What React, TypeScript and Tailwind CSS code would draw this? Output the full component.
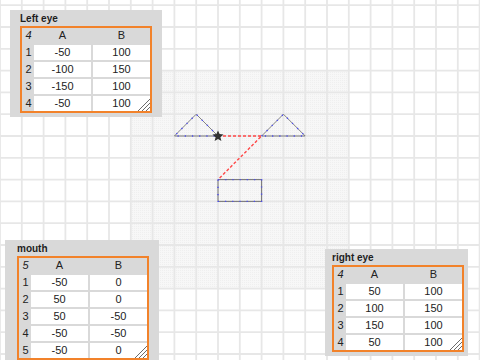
import React from "react";

type Row = [number, number];

const S = 0.436;
const OX = 239.8;
const OY = 179.6;
const px = (x: number, y: number) => `${OX + x * S},${OY - y * S}`;

function Handle() {
  return (
    <svg className="absolute right-0 bottom-0" width="13" height="13" viewBox="0 0 13 13">
      <g stroke="#fff" strokeWidth="1">
        <line x1="13" y1="2" x2="2" y2="13" />
        <line x1="13" y1="6" x2="6" y2="13" />
        <line x1="13" y1="10" x2="10" y2="13" />
      </g>
      <g stroke="#6b6b6b" strokeWidth="1">
        <line x1="13" y1="1" x2="1" y2="13" />
        <line x1="13" y1="5" x2="5" y2="13" />
        <line x1="13" y1="9" x2="9" y2="13" />
      </g>
    </svg>
  );
}

function TablePanel({ title, rows, className, pad }: { title: string; rows: Row[]; className: string; pad: string }) {
  return (
    <div className={`absolute bg-[#d9d9d9] ${pad} ${className}`}>
      <div className="h-[16px] flex items-center text-[10px] font-bold text-[#1e1e1e]">{title}</div>
      <div className="relative w-[132px] border-2 border-[#f2822a] grid grid-cols-[10px_1fr_1fr] gap-[2px] text-[11px] text-[#222]">
        <div className="h-[15px] flex items-center justify-center pl-[3px] italic">{rows.length}</div>
        <div className="h-[15px] flex items-center justify-center">A</div>
        <div className="h-[15px] flex items-center justify-center">B</div>
        {rows.map((r, i) => (
          <React.Fragment key={i}>
            <div className="h-[15px] flex items-center justify-center pl-[3px]">{i + 1}</div>
            <div className="h-[15px] flex items-center justify-center bg-white">{r[0]}</div>
            <div className="h-[15px] flex items-center justify-center bg-white">{r[1]}</div>
          </React.Fragment>
        ))}
        <Handle />
      </div>
    </div>
  );
}

function Stage() {
  const vx = Array.from({ length: 23 }, (_, k) => k * 21.8);
  const hy = Array.from({ length: 17 }, (_, k) => 5.2 + k * 21.8);
  const leftEye = [px(-50, 100), px(-100, 150), px(-150, 100), px(-50, 100)].join(" ");
  const rightEye = [px(50, 100), px(100, 150), px(150, 100), px(50, 100)].join(" ");
  const mouth = [px(-50, 0), px(50, 0), px(50, -50), px(-50, -50), px(-50, 0)].join(" ");
  const tx = OX - 50 * S;
  const ty = OY - 100 * S;
  return (
    <svg className="absolute inset-0" width="480" height="360" viewBox="0 0 480 360">
      <defs>
        <pattern id="dots" width="2" height="2" patternUnits="userSpaceOnUse">
          <rect width="2" height="2" fill="#f7f7f7" />
          <rect width="1" height="1" fill="#efefef" />
        </pattern>
      </defs>
      <rect x={OX - 109} y={OY - 109} width="218" height="218" fill="url(#dots)" />
      <g stroke="#e7e7e7" strokeWidth="1.8">
        {vx.map((x) => (
          <line key={"v" + x} x1={x} y1="0" x2={x} y2="360" />
        ))}
        {hy.map((y) => (
          <line key={"h" + y} x1="0" y1={y} x2="480" y2={y} />
        ))}
      </g>
      <g fill="none" strokeWidth="0.8">
        <polyline points={leftEye} stroke="#666" />
        <polyline points={rightEye} stroke="#666" />
        <polyline points={mouth} stroke="#555" />
        <g stroke="#4c4cf0" strokeWidth="1.4" strokeDasharray="1.2 6">
          <polyline points={leftEye} />
          <polyline points={rightEye} />
          <polyline points={mouth} />
        </g>
      </g>
      <polyline
        points={[px(-50, 100), px(50, 100), px(-50, 0)].join(" ")}
        fill="none"
        stroke="#ff4848"
        strokeWidth="1.4"
        strokeDasharray="3 2"
      />
      <polygon
        transform={`translate(${tx},${ty})`}
        points="0,-5.5 1.6,-2 5.5,-1.5 2.4,1.2 3.4,5 0,3 -3.4,5 -2.4,1.2 -5.5,-1.5 -1.6,-2"
        fill="#333"
      />
    </svg>
  );
}

export default function App() {
  return (
    <div className="relative w-[480px] h-[360px] overflow-hidden bg-white font-['Liberation_Sans',Arial,sans-serif]">
      <Stage />
      <TablePanel
        title="Left eye"
        rows={[[-50, 100], [-100, 150], [-150, 100], [-50, 100]]}
        className="left-[10px] top-[10px] w-[152px] h-[107px]"
        pad="pl-[10px]"
      />
      <TablePanel
        title="mouth"
        rows={[[-50, 0], [50, 0], [50, -50], [-50, -50], [-50, 0]]}
        className="left-[5px] top-[240px] w-[154px] h-[130px]"
        pad="pl-[12px]"
      />
      <TablePanel
        title="right eye"
        rows={[[50, 100], [100, 150], [150, 100], [50, 100]]}
        className="left-[325px] top-[249px] w-[143px] h-[107px]"
        pad="pl-[7px]"
      />
    </div>
  );
}
